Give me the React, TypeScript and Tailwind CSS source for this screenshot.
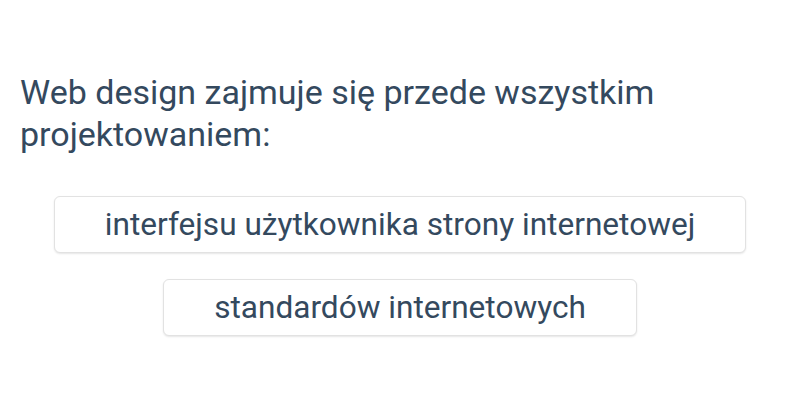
export default function App() {
  const answers = ['interfejsu użytkownika strony internetowej', 'standardów internetowych'];
  return (
    <div className="w-[800px] h-[400px] bg-white px-5 pt-[71px] font-['Roboto',sans-serif] text-[#34495e]">
      <p className="text-[34px] leading-[42px]">Web design zajmuje się przede wszystkim projektowaniem:</p>
      <div className="mt-[41px] flex flex-col items-center gap-[26px]">
        {answers.map((a) => (
          <button
            key={a}
            className="h-[57px] px-[50px] rounded-md border border-[#e2e2e2] bg-white text-[31.6px] text-[#34495e] shadow-[0_1px_2px_rgba(0,0,0,0.1)]"
          >
            {a}
          </button>
        ))}
      </div>
    </div>
  );
}
